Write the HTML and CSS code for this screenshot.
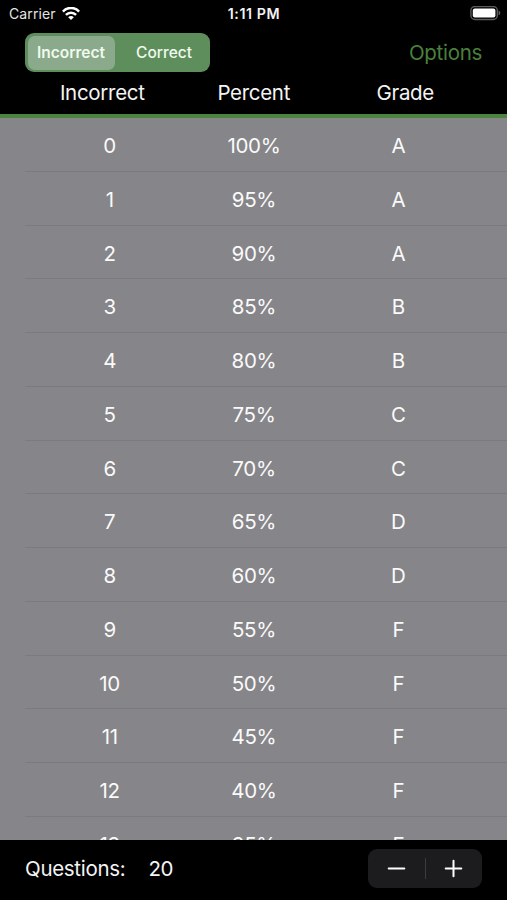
FILE: index.html
```html
<!DOCTYPE html>
<html lang="en">
<head>
<meta charset="utf-8">
<title>Grader</title>
<link rel="stylesheet" href="styles.css">
</head>
<body>
<div class="app">
  <div class="status">
    <div class="carrier"><span>Carrier</span>
      <svg width="18" height="14" viewBox="0 0 18 14" fill="none" stroke="#fff" stroke-width="2.5"><path d="M.9 4.6C5.4-.3 12.6-.3 17.1 4.6"/><path d="M3.9 7.8C6.8 4.9 11.2 4.9 14.1 7.8"/><path d="M6.2 10.2C7.8 8.6 10.2 8.6 11.8 10.2L9 13.1Z" fill="#fff" stroke="none"/></svg>
    </div>
    <div class="time">1:11 PM</div>
    <svg class="battery" width="31" height="15" viewBox="0 0 31 15"><rect x=".9" y=".5" width="26.4" height="13" rx="4" fill="none" stroke="#5b5b5d" stroke-width="1.4"/><rect x="2.8" y="2.4" width="22.6" height="9.2" rx="2" fill="#fff"/><path d="M28.6 4.6Q30.3 5.3 30.3 6.9T28.6 9.2Z" fill="#626264"/></svg>
  </div>
  <div class="toolbar">
    <div class="segments"><div class="segment selected"><span>Incorrect</span></div><div class="segment"><span>Correct</span></div></div>
    <div class="options">Options</div>
  </div>
  <div class="head"><span>Incorrect</span><span>Percent</span><span>Grade</span></div>
  <div class="list">
    <div class="row"><span>0</span><span>100%</span><span>A</span></div>
    <div class="row"><span>1</span><span>95%</span><span>A</span></div>
    <div class="row"><span>2</span><span>90%</span><span>A</span></div>
    <div class="row"><span>3</span><span>85%</span><span>B</span></div>
    <div class="row"><span>4</span><span>80%</span><span>B</span></div>
    <div class="row"><span>5</span><span>75%</span><span>C</span></div>
    <div class="row"><span>6</span><span>70%</span><span>C</span></div>
    <div class="row"><span>7</span><span>65%</span><span>D</span></div>
    <div class="row"><span>8</span><span>60%</span><span>D</span></div>
    <div class="row"><span>9</span><span>55%</span><span>F</span></div>
    <div class="row"><span>10</span><span>50%</span><span>F</span></div>
    <div class="row"><span>11</span><span>45%</span><span>F</span></div>
    <div class="row"><span>12</span><span>40%</span><span>F</span></div>
    <div class="row"><span>13</span><span>35%</span><span>F</span></div>
  </div>
  <div class="footer">
    <span class="label">Questions:</span><span class="count">20</span>
    <div class="stepper">
      <svg width="57" height="39" viewBox="0 0 57 39" stroke="#fff" stroke-width="2" stroke-linecap="round"><path d="M20.7 19.5H36.3"/></svg>
      <i></i>
      <svg width="57" height="39" viewBox="0 0 57 39" stroke="#fff" stroke-width="2" stroke-linecap="round"><path d="M20.7 19.5H36.3M28.5 11.7V27.3"/></svg>
    </div>
  </div>
</div>
</body>
</html>
```
FILE: styles.css
```css
* { box-sizing: border-box; }
body { margin: 0; background: #000; }
.app {
  width: 507px; height: 900px; overflow: hidden;
  display: flex; flex-direction: column;
  background: #000; color: #f4f4f4;
  font: 20.5px/26px Inter, "Liberation Sans", sans-serif;
  letter-spacing: -0.3px;
}
.status {
  height: 27px; flex: none; padding: 0 6px 0 9px;
  display: grid; grid-template-columns: 1fr auto 1fr; align-items: center;
  font-size: 14px; line-height: 27px; letter-spacing: 0.1px;
}
.carrier { display: flex; align-items: center; gap: 6px; color: #e4e4e4; }
.time { font-size: 14.2px; font-weight: 600; letter-spacing: 0.6px; padding-right: 2px; }
.battery { justify-self: end; }
.toolbar {
  height: 51px; flex: none; padding: 6px 25px 0;
  display: flex; justify-content: space-between; align-items: flex-start;
}
.segments {
  width: 185px; height: 39px; padding: 2.5px; border-radius: 9px;
  display: flex; background: #5f8e5d;
  font-size: 15.5px; line-height: 34px; font-weight: 500; letter-spacing: 0;
  color: #f0faed;
}
.segment { flex: 1; text-align: center; padding-left: 6px; border-radius: 7px; }
.segment.selected { flex: none; width: 87px; padding: 0; background: #8baa8c; font-weight: 600; }
.options { color: #4a803c; line-height: 39px; }
.head {
  height: 40px; flex: none; padding: 2px 26px 0 26.5px;
  display: grid; grid-template-columns: repeat(3, 1fr);
  border-bottom: 4px solid #4b8340; text-align: center;
}
.list { height: 722px; flex: none; overflow: hidden; background: #868589; }
.row {
  height: 53.75px; margin-left: 25px; padding: 1px 36.5px 0 12.5px;
  display: grid; grid-template-columns: repeat(3, 1fr);
  border-bottom: 1px solid #7b7a7e;
  text-align: center; line-height: 54px; color: #fafafa;
}
.footer {
  height: 60px; flex: none; padding: 0 25px 4px;
  display: flex; align-items: center;
}
.label, .count { padding-top: 2px; }
.count { margin-left: 23px; }
.stepper {
  width: 114px; height: 39px; margin-left: auto; border-radius: 9px;
  display: flex; align-items: center; background: #1c1c1e;
}
.stepper i { width: 1px; height: 21px; margin: 0 -0.5px; background: #3c3c3f; }
```
